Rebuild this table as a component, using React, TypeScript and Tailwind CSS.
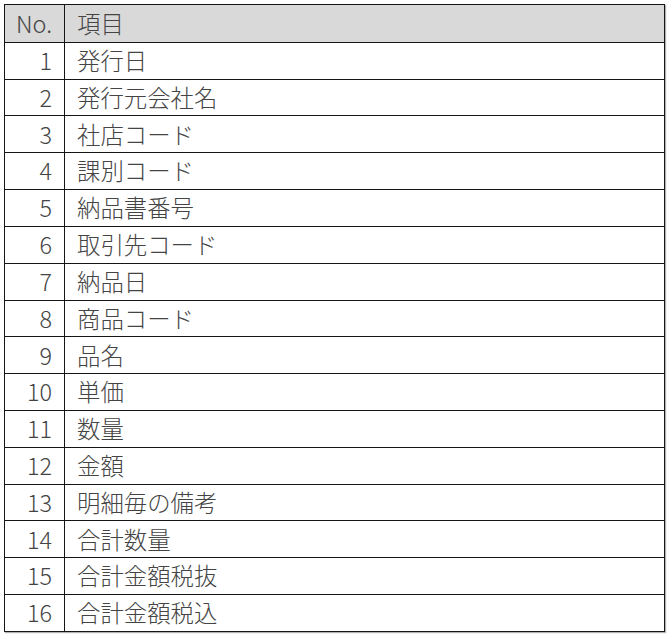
import React from 'react'

const items = [
    '発行日',
    '発行元会社名',
    '社店コード',
    '課別コード',
    '納品書番号',
    '取引先コード',
    '納品日',
    '商品コード',
    '品名',
    '単価',
    '数量',
    '金額',
    '明細毎の備考',
    '合計数量',
    '合計金額税抜',
    '合計金額税込',
]

const font = {
    fontFamily: '"Noto Sans CJK JP", "Noto Sans", sans-serif',
}

const Row = ({ no, label, header }: { no: string; label: string; header?: boolean }) => (
    <div
        className={`flex h-[36.82px] ${header ? 'bg-[#d9d9d9]' : 'border-t-[1.5px] border-[#151515] bg-white'}`}
    >
        <div className="flex w-[60px] shrink-0 items-center justify-end border-r-[1.5px] border-[#151515] pr-[12px]">
            {no}
        </div>
        <div className="flex flex-1 items-center pl-[12px]">{label}</div>
    </div>
)

export default function App() {
    return (
        <div className="h-[639px] w-[670px] bg-white pl-[4px] pt-[4px]">
            <div
                className="w-[661px] border-[1.5px] border-[#151515] text-[23.4px] font-light leading-none text-[#444444] shadow-[1px_1px_1px_rgba(0,0,0,0.3)]"
                style={font}
            >
                <Row no="No." label="項目" header />
                {items.map((label, i) => (
                    <Row key={label} no={String(i + 1)} label={label} />
                ))}
            </div>
        </div>
    )
}
